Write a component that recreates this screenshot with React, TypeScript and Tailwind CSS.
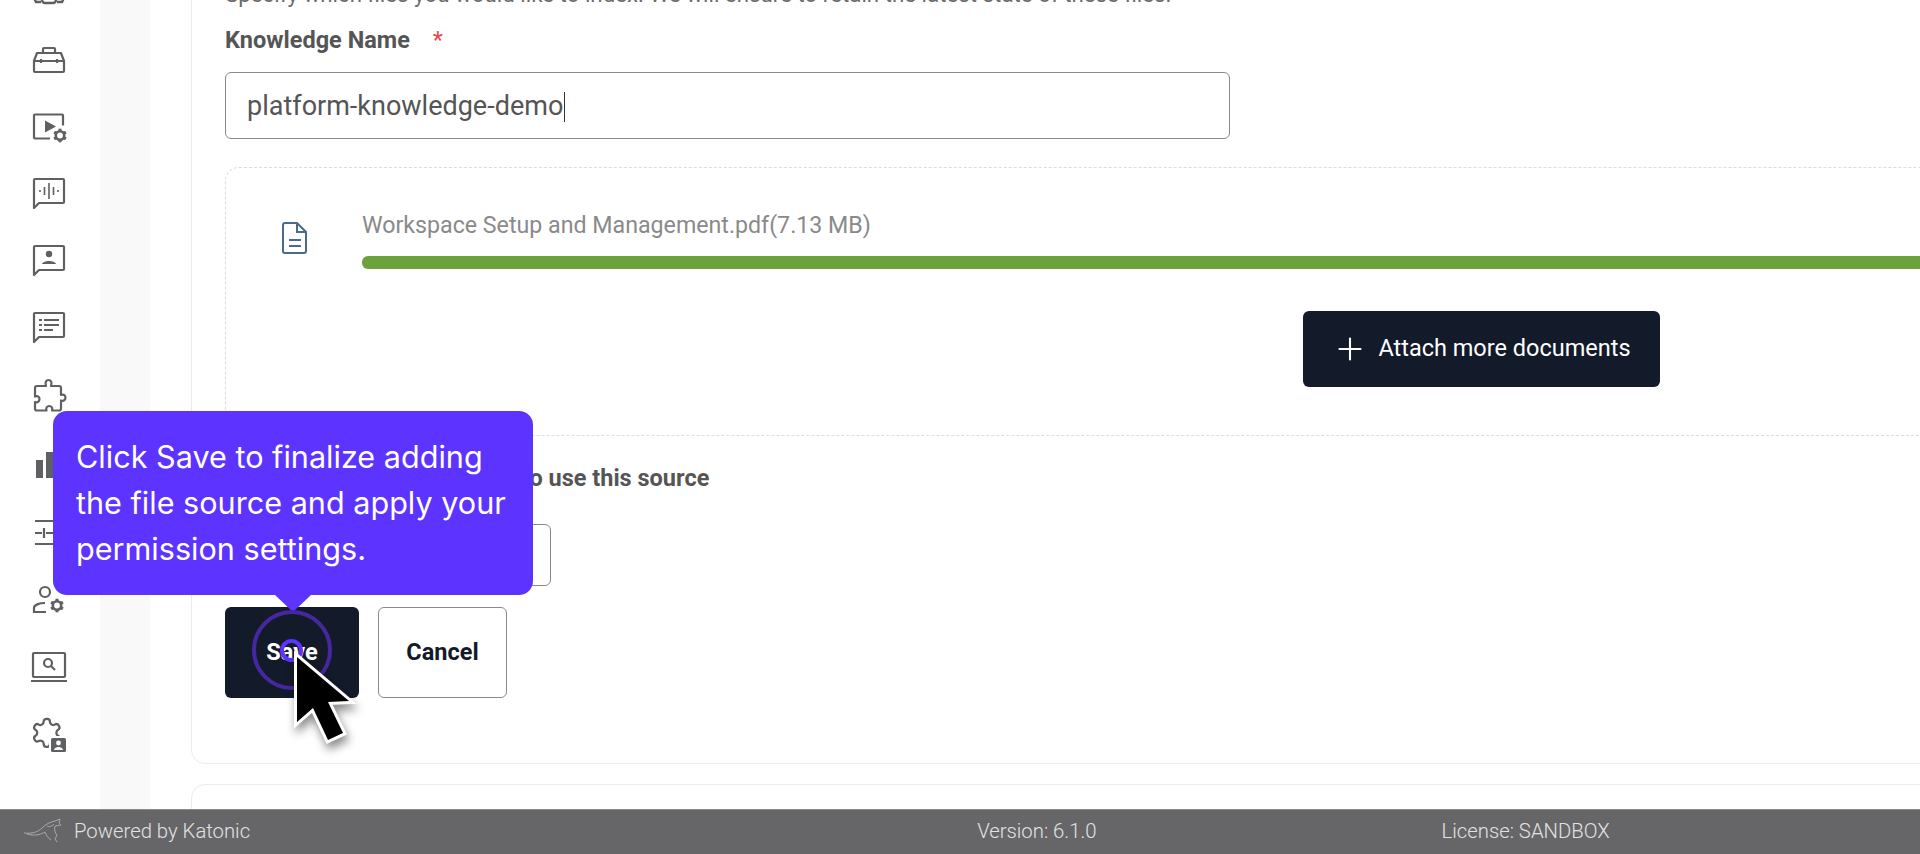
import React from 'react';
import { Plus } from 'lucide-react';

const stroke = '#5f6062';

const Gear = ({ cx, cy, r = 4 }: { cx: number; cy: number; r?: number }) => (
  <g stroke={stroke} fill="none">
    <circle cx={cx} cy={cy} r={r} strokeWidth={2.6} />
    {[0, 60, 120, 180, 240, 300].map((a) => (
      <line
        key={a}
        x1={cx}
        y1={cy - r}
        x2={cx}
        y2={cy - r - 2.6}
        strokeWidth={3}
        transform={`rotate(${a} ${cx} ${cy})`}
      />
    ))}
  </g>
);

const Bubble = () => (
  <path d="M5 5a1 1 0 0 1 1-1h28a1 1 0 0 1 1 1v22a1 1 0 0 1-1 1H10l-5 5z" fill="none" stroke={stroke} strokeWidth={2.2} strokeLinejoin="round" />
);

const icons: React.ReactNode[] = [
  // cut off by the scroll position
  <g key="top" fill="none" stroke={stroke} strokeWidth={2.4}>
    <path d="M5 26l2 4h5M35 26l-2 4h-5" />
    <rect x="13" y="22" width="14" height="9" rx="3" />
  </g>,
  <g key="toolbox" fill="none" stroke={stroke} strokeWidth={2.2} strokeLinejoin="round">
    <path d="M5 21l3-8h24l3 8v10a1 1 0 0 1-1 1H6a1 1 0 0 1-1-1z" />
    <path d="M14 13V9a1 1 0 0 1 1-1h10a1 1 0 0 1 1 1v4M5 21h30M12 19v4M28 19v4" />
  </g>,
  <g key="play" transform="translate(0 1.500)">
    <path d="M21 30H6a1 1 0 0 1-1-1V7a1 1 0 0 1 1-1h27a1 1 0 0 1 1 1v10" fill="none" stroke={stroke} strokeWidth={2.2} />
    <path d="M16 12l11 6-11 6z" fill={stroke} />
    <Gear cx={31} cy={27} r={4.2} />
  </g>,
  <g key="wave">
    <Bubble />
    <path d="M11 15v2M15.500 12v8M20 8v16M24.500 12v8M29 15v2" stroke={stroke} strokeWidth={1.6} fill="none" />
  </g>,
  <g key="contact">
    <Bubble />
    <circle cx="20" cy="12" r="3.200" fill={stroke} />
    <path d="M13 22c1-4 13-4 14 0z" fill={stroke} />
  </g>,
  <g key="list" transform="translate(0 -1)">
    <Bubble />
    <path d="M10 11h3M10 16h3M10 21h3M15 11h15M15 16h15M15 21h9" stroke={stroke} strokeWidth={2} fill="none" />
  </g>,
  <path
    key="puzzle"
    transform="translate(0 -2)"
    d="M8 10h9c-3-8 8-8 5 0h8a2 2 0 0 1 2 2v7c6-2.500 6 7.500 0 5.500v8a2 2 0 0 1-2 2h-7c2-6-7.500-6-5.500 0H8a2 2 0 0 1-2-2v-6.500c6 2 6-8 0-5.500V12a2 2 0 0 1 2-2z"
    fill="none"
    stroke={stroke}
    strokeWidth={2.200}
    strokeLinejoin="round"
  />,
  <g key="chart" fill={stroke}>
    <rect x="7" y="15" width="7" height="18" />
    <rect x="17" y="7" width="7" height="26" />
    <rect x="27" y="21" width="7" height="12" />
  </g>,
  <g key="sliders" fill="none" stroke={stroke} strokeWidth={2.2}>
    <path d="M6 8h30M6 20h7M17 20h19M6 31h18M28 31h8" />
    <path d="M15 15v10M26 27v8" />
  </g>,
  <g key="user" fill="none" stroke={stroke} strokeWidth={2.2}>
    <circle cx="16" cy="12" r="5" />
    <path d="M16 23c-6 0-11 2-11 5v4h12" />
    <Gear cx={28} cy={25.500} r={4.200} />
  </g>,
  <g key="laptop" fill="none" stroke={stroke} strokeWidth={2.2}>
    <rect x="4" y="5" width="32" height="24" rx="1" />
    <path d="M2 33h36" />
    <circle cx="19" cy="15" r="4" />
    <path d="M22 18l4 4" />
  </g>,
  <g key="lock">
    <path
      transform="translate(1 0) scale(1.4)"
      d="M12.220 2h-.44a2 2 0 0 0-2 2v.18a2 2 0 0 1-1 1.730l-.43.25a2 2 0 0 1-2 0l-.15-.08a2 2 0 0 0-2.730.73l-.22.38a2 2 0 0 0 .73 2.730l.15.1a2 2 0 0 1 1 1.720v.51a2 2 0 0 1-1 1.740l-.15.09a2 2 0 0 0-.73 2.730l.22.38a2 2 0 0 0 2.730.73l.15-.08a2 2 0 0 1 2 0l.43.25a2 2 0 0 1 1 1.730V20a2 2 0 0 0 2 2h.44a2 2 0 0 0 2-2v-.18a2 2 0 0 1 1-1.730l.43-.25a2 2 0 0 1 2 0l.15.08a2 2 0 0 0 2.730-.73l.22-.39a2 2 0 0 0-.73-2.730l-.15-.08a2 2 0 0 1-1-1.740v-.5a2 2 0 0 1 1-1.740l.15-.09a2 2 0 0 0 .73-2.730l-.22-.38a2 2 0 0 0-2.730-.73l-.15.08a2 2 0 0 1-2 0l-.43-.25a2 2 0 0 1-1-1.730V4a2 2 0 0 0-2-2z"
      fill="none"
      stroke={stroke}
      strokeWidth={1.600}
    />
    <rect x="20" y="20" width="18" height="17" rx="2" fill="#fff" />
    <rect x="22" y="22" width="15" height="14" rx="1.500" fill={stroke} />
    <circle cx="29.500" cy="27" r="2.400" fill="#fff" />
    <path d="M25 34c.5-4 8.500-4 9 0z" fill="#fff" />
  </g>,
];

const Sidebar = () => (
  <aside className="w-[100px] shrink-0 bg-white flex flex-col items-center gap-[27.6px] pr-[2px] -mt-[28px]">
    {icons.map((icon, i) => (
      <svg key={i} width="40" height="40" viewBox="0 0 40 40" className="shrink-0">
        {icon}
      </svg>
    ))}
  </aside>
);

const Footer = () => (
  <footer className="h-[45px] shrink-0 bg-[#666668] border-t border-[#8a8a8c] flex items-center pb-[2px] text-[20.3px] text-[#e2e2e2] font-[Roboto,sans-serif] font-light">
    <svg width="40" height="28" viewBox="0 0 40 28" className="ml-[23px] shrink-0" fill="none" stroke="#a9a9ab" strokeWidth="1">
      <path d="M1 16c8 1 14-1 18-5 4-4 8-6 13-7l5-2-1 4 2 2-6 1c-1 4 0 7 2 9l-2 4 2 3" />
      <path d="M4 17c7 2 13 1 18-2 1 3 3 6 6 8" />
      <path d="M24 9c2 1 4 1 7-2" />
    </svg>
    <span className="ml-[11px]">Powered by Katonic</span>
    <span className="ml-[727px]">Version: 6.1.0</span>
    <span className="ml-[345px]">License: SANDBOX</span>
  </footer>
);

const Tooltip = () => (
  <div className="absolute left-[53px] top-[411px] w-[480px] h-[184px] rounded-[14px] bg-[#5c33ff] pl-[23px] pt-[23px] text-white text-[30.6px] leading-[46px] font-[Inter,sans-serif]">
    Click Save to finalize adding
    <br />
    the file source and apply your
    <br />
    permission settings.
    <div className="absolute left-[222px] top-full w-0 h-0 border-x-[18px] border-x-transparent border-t-[17px] border-t-[#5c33ff]" />
  </div>
);

const Pointer = () => (
  <>
    <div className="absolute left-[252px] top-[610px] w-[80px] h-[80px] rounded-full border-[4px] border-[#45289f]" />
    <div className="absolute left-[280px] top-[639px] w-[23px] h-[23px] rounded-full border-[4px] border-[#5c33ff]" />
    <svg width="90" height="120" viewBox="285 645 90 120" className="absolute left-[285px] top-[645px] drop-shadow-[2px_6px_5px_rgba(0,0,0,0.45)]">
      <path
        d="M297 657V722L313 708L328 740L343 733L328 702L349 701Z"
        fill="#000"
        stroke="#fff"
        strokeWidth="6"
        strokeLinejoin="miter"
        paintOrder="stroke"
      />
    </svg>
  </>
);

export default function App() {
  return (
    <div className="relative h-[854px] w-full overflow-hidden bg-white flex flex-col font-[Roboto,sans-serif]">
      <div className="flex flex-1 min-h-0 overflow-hidden">
        <Sidebar />
        <div className="w-[50px] shrink-0 bg-[#f9f9f9]" />
        <main className="flex-1 min-w-0 pl-[41px] overflow-hidden">
          <div className="w-[2400px] -mt-[61px] border border-[#ececec] rounded-[14px] pl-[33px] pt-[42px] pb-[65px]">
            <p className="h-[24px] text-[22.3px] leading-[24px] whitespace-nowrap text-[#6b6b6b]">
              Specify which files you would like to index. We will ensure to retain the latest state of these files.
            </p>
            <div className="mt-[21px] h-[28px] flex items-center text-[23.5px] font-bold text-[#555555]">
              Knowledge Name
              <span className="ml-[23px] font-normal text-[#e5484d]">*</span>
            </div>
            <div className="mt-[17px] w-[1005px] h-[67px] flex items-center border border-[#8a8a8c] rounded-[6px] pl-[21px] pt-[2px] text-[27px] text-[#555555]">
              platform-knowledge-demo
              <span className="ml-[1px] w-[1px] h-[30px] bg-[#333333]" />
            </div>
            <div className="mt-[28px] w-[2340px] h-[269px] border border-dashed border-[#dddddd] rounded-[14px] pt-[44px]">
              <div className="flex">
                <div className="w-[136px] shrink-0 flex justify-center pt-[10px] pl-[2px]">
                  <svg width="26" height="32" viewBox="0 0 26 32" fill="none" stroke="#4a6a8a" strokeWidth="2">
                    <path d="M3 1h12l9 9v19a2 2 0 0 1-2 2H3a2 2 0 0 1-2-2V3a2 2 0 0 1 2-2z" />
                    <path d="M15 1v9h9M7 18h12M7 24h12" />
                  </svg>
                </div>
                <div className="flex-1">
                  <div className="h-[26px] flex items-center text-[23.2px] text-[#8a8a8a]">
                    Workspace Setup and Management.pdf(7.13 MB)
                  </div>
                  <div className="mt-[18px] h-[13px] bg-[#6ca23c] rounded-l-[6px]" />
                </div>
              </div>
              <button className="mt-[42px] ml-[1077px] w-[357px] h-[76px] flex items-center justify-center gap-[10px] bg-[#131a2a] rounded-[6px] text-[23.5px] font-normal text-white">
                <Plus size={36} strokeWidth={1.4} />
                Attach more documents
              </button>
            </div>
            <div className="mt-[29px] ml-[7px] h-[28px] flex items-center text-[23.5px] font-bold whitespace-nowrap text-[#555555]">
              Choose the people allowed to use this source
            </div>
            <div className="mt-[31px] w-[326px] h-[62px] border border-[#8a8a8c] rounded-[6px]" />
            <div className="mt-[21px] flex gap-[19px]">
              <button className="w-[134px] h-[91px] bg-[#131a2a] rounded-[6px] text-[23.5px] font-bold text-white">Save</button>
              <button className="w-[129px] h-[91px] bg-white border border-[#8a8a8c] rounded-[6px] text-[23.5px] font-bold text-[#131a2a]">Cancel</button>
            </div>
          </div>
          <div className="w-[2400px] h-[100px] mt-[20px] border border-[#ececec] rounded-[14px]" />
        </main>
      </div>
      <Footer />
      <Tooltip />
      <Pointer />
    </div>
  );
}
